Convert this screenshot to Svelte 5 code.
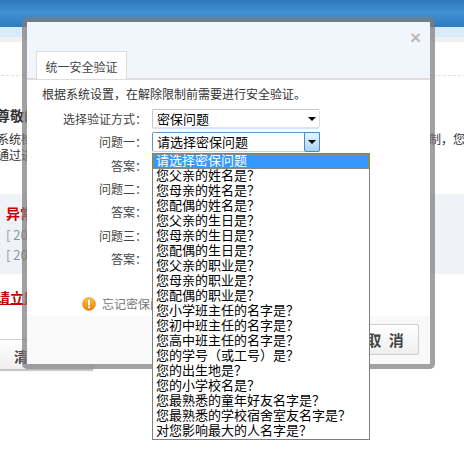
<script>
	const questions = [
		'请选择密保问题',
		'您父亲的姓名是？',
		'您母亲的姓名是？',
		'您配偶的姓名是？',
		'您父亲的生日是？',
		'您母亲的生日是？',
		'您配偶的生日是？',
		'您父亲的职业是？',
		'您母亲的职业是？',
		'您配偶的职业是？',
		'您小学班主任的名字是？',
		'您初中班主任的名字是？',
		'您高中班主任的名字是？',
		'您的学号（或工号）是？',
		'您的出生地是？',
		'您的小学校名是？',
		'您最熟悉的童年好友名字是？',
		'您最熟悉的学校宿舍室友名字是？',
		'对您影响最大的人名字是？'
	];
	const rows = ['问题二', '答案', '问题三', '答案'];
</script>

<div class="page">
	<div class="topbar"></div>
	<div class="subbar"></div>
	<div class="strip"></div>
	<div class="main">
		<div class="dash"></div>
		<h3>尊敬的用户</h3>
		<p class="line">系统检测到您的帐号存在安全风险，为保护您的帐号安全，系统已对帐号进行了限制，您</p>
		<p class="line">通过进行安全验证</p>
		<div class="notice">
			<div class="alert">异常</div>
			<p>[ 2014 ]</p>
			<p>[ 2014 ]</p>
		</div>
		<a class="fix" href="#top">请立即</a>
		<div class="bigbtn">清除</div>
	</div>

	<div class="dialog">
		<div class="head">
			<span class="close">×</span>
			<div class="tab">统一安全验证</div>
		</div>
		<div class="body">
			<p class="intro">根据系统设置，在解除限制前需要进行安全验证。</p>
			<div class="form">
				<label>选择验证方式：</label>
				<div class="select">
					<span>密保问题</span>
					<i class="plain"></i>
				</div>
				<label>问题一：</label>
				<div class="select active">
					<span>请选择密保问题</span>
					<b><i></i></b>
				</div>
				<label>答案：</label>
				<div></div>
				{#each rows as r}
					<label>{r}：</label>
					<div></div>
				{/each}
			</div>
			<div class="forgot">
				<svg width="14" height="14" viewBox="0 0 14 14">
					<defs>
						<linearGradient id="warn" x1="0" y1="0" x2="0" y2="1">
							<stop offset="0" stop-color="#fbc33c" />
							<stop offset="1" stop-color="#e8820c" />
						</linearGradient>
					</defs>
					<circle cx="7" cy="7" r="6.5" fill="url(#warn)" stroke="#dc8a1c" stroke-width="0.6" />
					<rect x="6" y="2.8" width="2" height="5.4" fill="#fff" />
					<rect x="6" y="9.2" width="2" height="2" fill="#fff" />
				</svg>
				<span>忘记密保问题</span>
			</div>
		</div>
		<div class="foot">
			<div class="cancel">取 消</div>
		</div>
	</div>

	<ul class="dropdown">
		{#each questions as q, i}
			<li class:selected={i === 0}>{q}</li>
		{/each}
	</ul>
</div>

<style>
	:global(body) {
		margin: 0;
		background: #fff;
	}
	.page {
		position: relative;
		width: 464px;
		height: 449px;
		overflow: hidden;
		font-family: 'Noto Sans CJK SC', 'Liberation Sans', sans-serif;
		font-size: 12px;
		color: #333;
	}
	.topbar {
		height: 27px;
		background: linear-gradient(#2f77b8, #3f92d4 45%, #2f7cc0);
	}
	.subbar {
		height: 10px;
		background: #d8ebfb;
	}
	.strip {
		height: 5px;
		background: #f0f0f0;
	}
	.main {
		margin-left: -4px;
		width: 500px;
	}
	.dash {
		margin-top: 33px;
		border-top: 1px dashed #ddd;
	}
	h3 {
		margin: 30px 0 0;
		font-size: 14px;
		line-height: 18px;
		color: #333;
	}
	.line {
		margin: 0;
		padding-left: 1px;
		line-height: 16px;
		white-space: nowrap;
	}
	h3 + .line {
		margin-top: 7px;
	}
	.notice {
		margin: 31px 0 0 4px;
		height: 80px;
		box-sizing: border-box;
		padding: 9px 6px;
		background: #eff3f8;
		color: #8795a8;
	}
	.notice p {
		margin: 0;
		line-height: 20px;
		font-size: 13px;
	}
	.alert {
		color: #c00;
		font-weight: bold;
		font-size: 14px;
		line-height: 20px;
		margin-bottom: 2px;
	}
	.fix {
		display: block;
		margin-top: 14px;
		color: #c00;
		font-weight: bold;
		font-size: 14px;
		line-height: 18px;
		width: 60px;
	}
	.bigbtn {
		margin-top: 33px;
		margin-left: 4px;
		width: 93px;
		height: 31px;
		box-sizing: border-box;
		border-top: 1px solid #ccc;
		border-right: 1px solid #ccc;
		border-bottom: 1px solid #bbb;
		background: linear-gradient(#fff, #eee);
		padding-left: 14px;
		font-size: 14px;
		font-weight: bold;
		line-height: 32px;
		color: #444;
		box-shadow: 0 1px 1px #ccc;
	}

	.dialog {
		position: absolute;
		left: 22px;
		top: 17px;
		width: 403px;
		height: 342px;
		border: 5px solid rgba(126, 124, 124, 0.72);
		border-radius: 5px;
		background: #fff;
		background-clip: padding-box;
		display: flex;
		flex-direction: column;
	}
	.head {
		position: relative;
		height: 58px;
		box-sizing: border-box;
		flex: none;
		padding: 30px 0 0 9px;
		background: #f1f6fd;
		border-bottom: 2px solid #ddd;
	}
	.close {
		position: absolute;
		right: 9px;
		top: 6px;
		font-family: 'Liberation Sans', sans-serif;
		font-size: 19px;
		line-height: 20px;
		font-weight: bold;
		color: #bbb;
	}
	.tab {
		display: inline-block;
		width: 91px;
		height: 28px;
		box-sizing: border-box;
		border: 1px solid #ddd;
		border-bottom: none;
		background: #fff;
		text-align: center;
		line-height: 29px;
		color: #444;
		margin-top: -1px;
	}
	.body {
		flex: 1;
		padding: 0 14px;
		position: relative;
	}
	.intro {
		margin: 5px 0 0 1px;
		line-height: 18px;
		color: #333;
	}
	.form {
		margin-top: 6px;
		display: grid;
		grid-template-columns: 106px 168px;
		grid-auto-rows: 20px;
		row-gap: 3.33px;
		column-gap: 5px;
	}
	label {
		text-align: right;
		line-height: 20px;
		color: #444;
	}
	.select {
		position: relative;
		box-sizing: border-box;
		width: 168px;
		height: 20px;
		border: 1px solid #c6c6c6;
		border-bottom: 2px solid #e0e4ea;
		border-right: 1px solid #e0e0e0;
		border-radius: 2px;
		background: #fff;
		padding-left: 4px;
		font-size: 13px;
		line-height: 18px;
		color: #000;
	}
	.select.active {
		border: 1px solid #5d95c4;
		border-bottom-color: #c3d6e6;
	}
	.select i {
		position: absolute;
		width: 0;
		height: 0;
		border-left: 4px solid transparent;
		border-right: 4px solid transparent;
		border-top: 4px solid #000;
	}
	.plain {
		right: 3px;
		top: 7px;
	}
	.select b {
		position: absolute;
		right: -1px;
		top: -1px;
		width: 16px;
		height: 20px;
		box-sizing: border-box;
		border: 1px solid #4f8ab9;
		border-radius: 2px;
		background: linear-gradient(#eaf4fc, #a6d3f2);
	}
	.select b i {
		left: 3px;
		top: 7px;
	}
	.forgot {
		position: absolute;
		left: 55px;
		top: 215px;
		display: flex;
		align-items: center;
		gap: 6px;
		color: #777;
	}
	.forgot svg {
		flex: none;
	}
	.foot {
		height: 48px;
		flex: none;
		box-sizing: border-box;
		background: #f9f9f9;
		padding: 8px 11px 0 0;
		display: flex;
		justify-content: flex-end;
	}
	.cancel {
		width: 68px;
		height: 31px;
		box-sizing: border-box;
		border: 1px solid #ccc;
		border-radius: 2px;
		background: linear-gradient(#fff, #eee);
		font-size: 15px;
		font-weight: bold;
		word-spacing: 4px;
		line-height: 29px;
		color: #444;
		text-align: center;
	}

	.dropdown {
		position: absolute;
		left: 152px;
		top: 153px;
		width: 218px;
		margin: 0;
		padding: 0;
		box-sizing: border-box;
		list-style: none;
		background: #fff;
		border: 1px solid #7f7f86;
	}
	.dropdown li {
		height: 15px;
		line-height: 11px;
		font-size: 13px;
		color: #000;
		padding-left: 3px;
		white-space: nowrap;
	}
	.dropdown li.selected {
		box-sizing: border-box;
		background: #3399ff;
		color: #fff;
		border: 1px dotted #d47a10;
		padding-left: 2px;
		line-height: 10px;
	}
</style>
